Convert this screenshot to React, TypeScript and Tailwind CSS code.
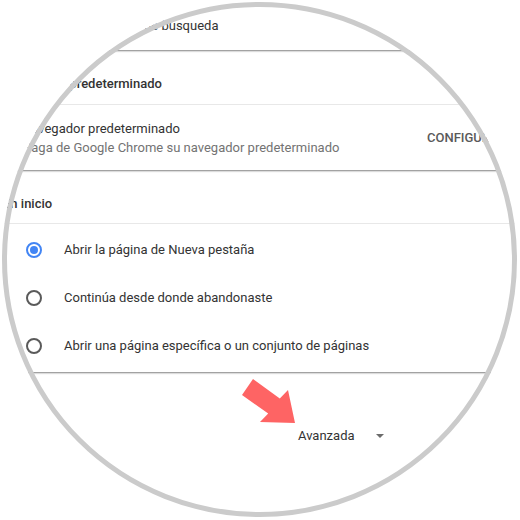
import React from "react";

const card =
  "bg-white shadow-[0_-1px_0_#e8e8e8,0_1px_0_#a2a2a2,0_2px_1px_#dcdcdc]";

function Radio({ checked }: { checked?: boolean }) {
  return checked ? (
    <span className="flex h-4 w-4 items-center justify-center rounded-full border-2 border-[#4285f4]">
      <span className="h-2 w-2 rounded-full bg-[#4285f4]" />
    </span>
  ) : (
    <span className="h-4 w-4 rounded-full border-2 border-[#5a5a5a]" />
  );
}

const startup = [
  { label: "Abrir la página de Nueva pestaña", checked: true },
  { label: "Continúa desde donde abandonaste" },
  { label: "Abrir una página específica o un conjunto de páginas" },
];

export default function App() {
  return (
    <div className="relative h-[520px] w-[520px] overflow-hidden bg-white font-['Roboto',sans-serif] text-[13px] text-[#333]">
      <div className="flex w-[620px] flex-col pl-[3px]">
        {/* buscador */}
        <div className={`${card} h-[50px] pl-[19px] pt-[16px] leading-[20px]`}>
          Administrar motores de busqueda
        </div>

        <div className="h-[55px] pt-[24px] font-medium leading-[20px]">
          Navegador predeterminado
        </div>

        <div className={`${card} flex h-[65px] items-center pl-[19px]`}>
          <div className="w-[405px]">
            <div className="leading-[19px]">Navegador predeterminado</div>
            <div className="leading-[19px] text-[#737373]">
              Haga de Google Chrome su navegador predeterminado
            </div>
          </div>
          <span className="font-medium text-[#5a5a5a]">CONFIGURAR</span>
        </div>

        <div className="h-[54px] pt-[24px] font-medium leading-[20px]">
          En inicio
        </div>

        <div className={`${card} flex flex-col pb-[2px] pt-[2px]`}>
          {startup.map((item) => (
            <div key={item.label} className="flex h-[48px] items-center pl-[23px]">
              <Radio checked={item.checked} />
              <span className="ml-[22px]">{item.label}</span>
            </div>
          ))}
        </div>

        <div className="mt-[54px] flex items-center pl-[295px] leading-[20px]">
          <span>Avanzada</span>
          <svg width="8" height="4" viewBox="0 0 8 4" className="ml-[21px]">
            <path d="M0 0h8L4 4z" fill="#6b6b6b" />
          </svg>
        </div>
      </div>

      {/* flecha */}
      <svg
        className="pointer-events-none absolute left-0 top-0"
        width="520"
        height="520"
        viewBox="0 0 520 520"
      >
        <polygon
          points="253,379 279.8,398.5 288,390 295,423 260,422 268.2,413.5 242,395"
          fill="#fe6464"
        />
      </svg>

      {/* lupa circular */}
      <div className="pointer-events-none absolute left-[2px] top-[2px] h-[515px] w-[515px] rounded-full border-[5px] border-[#cbcbcb] shadow-[0_0_0_300px_#fff]" />
    </div>
  );
}
